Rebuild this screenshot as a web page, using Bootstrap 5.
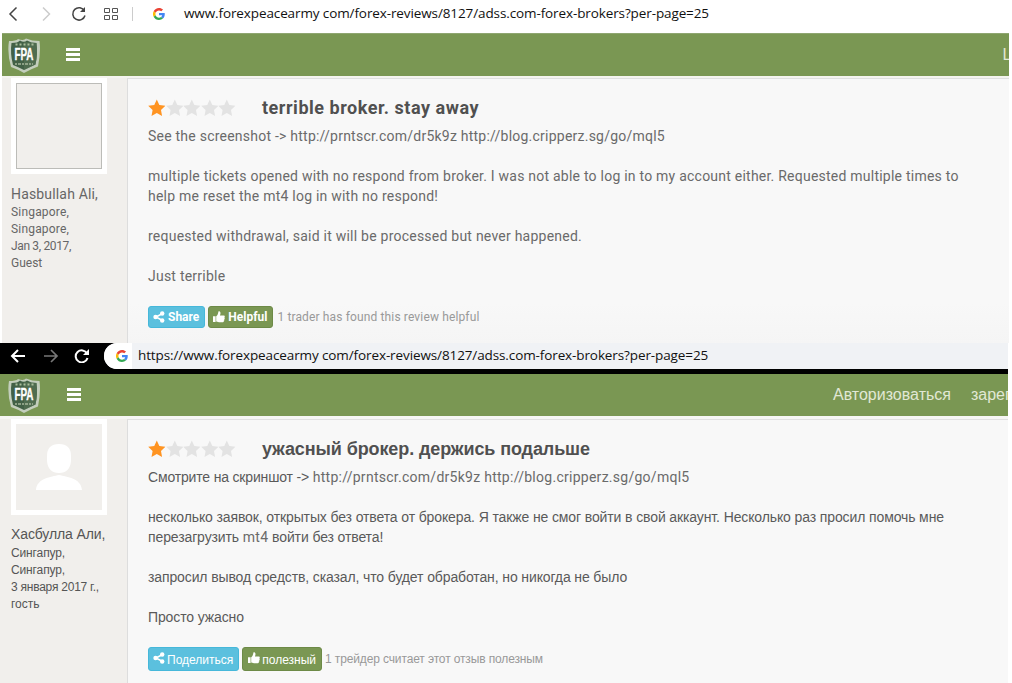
<!DOCTYPE html>
<html lang="en">
<head>
    <meta charset="UTF-8">
    <meta name="viewport" content="width=device-width, initial-scale=1.0">
    <title>ADSS reviews</title>
    <link href="https://cdn.jsdelivr.net/npm/bootstrap@5.3.0/dist/css/bootstrap.min.css" rel="stylesheet">
    <style>
        body {
            width: 1012px;
            height: 683px;
            overflow: hidden;
            background: #fff;
            color: #555;
            font-family: Roboto, "Liberation Sans", sans-serif;
            font-size: 14px;
            line-height: 20px;
        }
        svg { display: block; flex: none; }
        .capture { overflow: hidden; white-space: nowrap; }
        .capture-en { height: 343px; }
        .capture-ru { height: 340px; font-family: "Liberation Sans", sans-serif; }

        /* browser bars */
        .url-text {
            font: 13.5px/20px "Open Sans", "Noto Sans", sans-serif;
            letter-spacing: -0.11px;
            color: #111;
            padding-bottom: 2px;
        }
        .bar-light { height: 33px; padding: 0 0 5px 5px; }
        .bar-light .sep { width: 1px; height: 14px; background: #ccc; }
        .bar-dark { height: 31px; width: 1008px; background: #000; padding-bottom: 5px; }
        .address-pill {
            height: 26px;
            background: #f0f2f5;
            border-radius: 13px 0 0 13px;
            padding-left: 4px;
        }
        .g-disc { width: 28px; height: 26px; margin-left: -4px; padding-left: 4px; border-radius: 13px 0 0 13px; background: #fff; }

        /* site header */
        .site-bar { height: 42px; background: #7a9753; color: #e1e8d5; font-size: 16px; overflow: hidden; }
        .capture-en .site-bar { height: 43px; width: 1007px; margin-left: 2px; padding-left: 6px; border-top: 1px solid #8fa671; }
        .capture-ru .site-bar { width: 1008px; padding-left: 8px; }
        .menu-icon { flex: none; width: 14px; height: 13px; margin-bottom: 1px; border-top: 3px solid #fff; border-bottom: 3px solid #fff; }
        .menu-icon::after { content: ""; display: block; height: 3px; margin-top: 2px; background: #fff; }

        /* review */
        .review { background: #f1efec; }
        .capture-en .review { width: 1007px; margin-left: 2px; height: 267px; border-top: 2px solid #f4f4ef; }
        .capture-ru .review { width: 1008px; height: 267px; border-top: 3px solid #f6f6f4; }
        .author { width: 125px; padding-left: 9px; font-size: 12px; line-height: 17px; color: #666; }
        .capture-ru .author { width: 127px; padding-left: 11px; color: #555; }
        .avatar { width: 96px; height: 96px; padding: 5px; background: #fff; }
        .avatar div { width: 86px; height: 86px; background: #f1efec; }
        .avatar .missing { border: 1px solid #bcbcb8; }
        .author-name { font-size: 14px; line-height: 20px; }
        .review-body { background: #f8f8f8; border-left: 1px solid #ddd; border-top: 1px solid #e0e0e0; padding: 18px 0 0 20px; }
        .capture-en .review-body { background: linear-gradient(#f8f8f8 85%, #f5f5f5); }
        .review-title { font-size: 18px; line-height: 22px; font-weight: 700; color: #505050; margin: 0 0 0 26px; }
        .review-body p { margin: 0 0 20px; color: #6a6a6a; }
        .capture-ru .review-body p { color: #5a5a5a; }
        .votes { margin-top: 1px; }
        .vote { height: 22px; padding: 0 5px; border-radius: 3px; font-size: 12px; line-height: 20px; color: #fff; display: flex; align-items: center; }
        .capture-ru .vote { height: 24px; padding-top: 1px; }
        .vote-share { background: #5bc0de; border: 1px solid #46b8da; }
        .vote-helpful { background: #7a9753; border: 1px solid #6d8a47; }
        .count-text { font-size: 12px; color: #999; }

        /* tracking */
        .t-en { letter-spacing: 0.232px; }
        .t-ru { letter-spacing: -0.118px; }
        .t-link { font-family: Roboto, sans-serif; letter-spacing: 0.27px; color: #6a6a6a; }
    </style>
</head>
<body>
    <svg width="0" height="0" class="position-absolute">
        <defs>
            <symbol id="google" viewBox="0 0 48 48">
                <path fill="#ea4335" d="M24 9.500c3.500 0 6.700 1.200 9.200 3.600l6.900-6.900C35.900 2.400 30.500 0 24 0 14.600 0 6.500 5.400 2.600 13.200l8 6.200C12.400 13.700 17.700 9.500 24 9.500z"/>
                <path fill="#4285f4" d="M47 24.600c0-1.600-.2-3.100-.4-4.600H24v9h12.900c-.6 3-2.200 5.500-4.700 7.200l7.700 6C44.400 38 47 31.800 47 24.600z"/>
                <path fill="#fbbc05" d="M10.500 28.600a14.500 14.500 0 0 1 0-9.200l-8-6.200a24 24 0 0 0 0 21.600z"/>
                <path fill="#34a853" d="M24 48c6.500 0 11.900-2.100 15.900-5.800l-7.700-6c-2.200 1.400-4.900 2.300-8.200 2.300-6.300 0-11.600-4.200-13.500-9.900l-8 6.200C6.500 42.600 14.600 48 24 48z"/>
            </symbol>
            <symbol id="fpa" viewBox="0 0 32 35">
                <path d="M1 3Q8 3 10 1Q16 3 18 .5Q24 3 31.500 3Q33 14 30 28.500Q23 31 16 35Q9 31 3 29Q-1 15 1 3Z" fill="#c3cebc"/>
                <path d="M3.500 5Q10 5 12 2.500Q16 5 19 2.500Q23 5 28.500 5Q30 16 27.500 26.500Q22 29 16 32Q10 29 5 27Q2 15 3.500 5Z" fill="#426046"/>
                <path d="M16 4L28.500 5Q30 16 27.500 26.500L16 32Z" fill="#587555" opacity=".6"/>
                <path d="M7.500 6.500h18" stroke="#a9bd9b" stroke-width="2" stroke-dasharray="2 2"/>
                <text x="16" y="22" text-anchor="middle" textLength="19" lengthAdjust="spacingAndGlyphs" font-family="Liberation Sans" font-weight="700" font-size="17" fill="#fff" stroke="#fff" stroke-width=".4">FPA</text>
                <path d="M7 26h18" stroke="#a5b59b" stroke-width="1.600" stroke-dasharray="2 1 3 1"/>
            </symbol>
            <symbol id="star" viewBox="0 0 18 18">
                <path d="M9 .3l2.600 5.600 6.200.8-4.500 4.300 1.100 6.200L9 14.200l-5.400 3 1.100-6.200L.2 6.700l6.200-.8z"/>
            </symbol>
            <symbol id="share" viewBox="0 0 12 12">
                <path d="M9.500 2.500L3 6l6.500 3.500" fill="none" stroke="#fff" stroke-width="1.500"/>
                <g fill="#fff"><circle cx="9.200" cy="2.500" r="2.200"/><circle cx="2.600" cy="6" r="2.300"/><circle cx="9.200" cy="9.500" r="2.200"/></g>
            </symbol>
            <symbol id="thumb" viewBox="0 0 12 12">
                <path fill="#fff" d="M0 5.200h2.600V11H0zM3.200 5.200C4.600 4.500 5 3 5.400.7 5.600-.1 7.500.3 7.500 2.200c0 1-.4 1.700-.6 2.300h3.700c1.300 0 1.500 1.400.8 1.900.6.500.5 1.500-.2 1.800.4.600.2 1.400-.4 1.600.2 1-.4 1.500-1.400 1.500H7c-1.500 0-2.300-.5-3.800-.8z"/>
            </symbol>
        </defs>
    </svg>

    <section class="capture capture-en">
        <div class="bar-light d-flex align-items-center">
            <svg width="18" height="16" fill="none" stroke="#444" stroke-width="1.500"><path d="M11.500 1.500L5 8l6.500 6.500"/></svg>
            <svg width="18" height="16" class="ms-3" fill="none" stroke="#ccc" stroke-width="1.500"><path d="M4 1.500L10.500 8 4 14.500"/></svg>
            <svg width="16" height="16" style="margin-left:14px" fill="none" stroke="#444" stroke-width="1.500"><path d="M13.500 5A6.200 6.200 0 1 0 14 9.500"/><path d="M14 1v5h-5z" fill="#444" stroke="none"/></svg>
            <svg width="14" height="12" style="margin-left:17px" fill="none" stroke="#555"><path d="M.5.5h5v4h-5zM8.500.5h5v4h-5zM.5 7.500h5v4h-5zM8.500 7.500h5v4h-5z"/></svg>
            <div class="sep" style="margin-left:14px"></div>
            <svg width="12" height="12" style="margin-left:20px"><use href="#google"/></svg>
            <span class="url-text" style="margin-left:19px">www.forexpeacearmy com/forex-reviews/8127/adss.com-forex-brokers?per-page=25</span>
        </div>
        <div class="site-bar d-flex align-items-center">
            <svg width="32" height="35"><use href="#fpa"/></svg>
            <div class="menu-icon" style="margin-left:26px"></div>
            <span class="ms-auto" style="margin-right:-2px">L</span>
        </div>
        <div class="review d-flex">
            <div class="author flex-shrink-0">
                <div class="avatar"><div class="missing"></div></div>
                <div style="height:10px"></div>
                <div class="author-name" style="letter-spacing:.165px">Hasbullah Ali,</div>
                <div style="letter-spacing:.18px">Singapore,<br>Singapore,</div>
                <div style="letter-spacing:-.35px">Jan 3, 2017,</div>
                <div>Guest</div>
            </div>
            <div class="review-body flex-grow-1">
                <div class="d-flex align-items-center">
                    <div class="stars d-flex"></div>
                    <h5 class="review-title" style="letter-spacing:.53px">terrible broker. stay away</h5>
                </div>
                <div class="t-en" style="padding-top:7px">
                    <p>See the screenshot -&gt; http://prntscr.com/dr5k9z http://blog.cripperz.sg/go/mql5</p>
                    <p>multiple tickets opened with no respond from broker. I was not able to log in to my account either. Requested multiple times to<br>help me reset the mt4 log in with no respond!</p>
                    <p>requested withdrawal, said it will be processed but never happened.</p>
                    <p>Just terrible</p>
                </div>
                <div class="votes d-flex align-items-center">
                    <span class="vote vote-share fw-bold"><svg width="12" height="12" style="margin:0 3px 0 -1px"><use href="#share"/></svg>Share</span>
                    <span class="vote vote-helpful fw-bold" style="margin-left:3px"><svg width="12" height="12" style="margin:0 3px 0 -1px"><use href="#thumb"/></svg>Helpful</span>
                    <span class="count-text" style="margin-left:4px;letter-spacing:.14px">1 trader has found this review helpful</span>
                </div>
            </div>
        </div>
    </section>

    <section class="capture capture-ru">
        <div class="bar-dark d-flex align-items-center">
            <svg width="16" height="14" style="margin-left:10px" fill="none" stroke="#fff" stroke-width="2"><path d="M8 1L2 7l6 6M2 7h13"/></svg>
            <svg width="16" height="14" style="margin-left:17px" fill="none" stroke="#777" stroke-width="1.700"><path d="M8 1l6 6-6 6M14 7H1"/></svg>
            <svg width="16" height="14" style="margin-left:15px" fill="none" stroke="#fff" stroke-width="2"><path d="M13 4.500A6 6 0 1 0 13.500 9"/><path d="M15 0v6H9z" fill="#fff" stroke="none"/></svg>
            <div class="address-pill d-flex align-items-center flex-grow-1" style="margin-left:14px">
                <div class="g-disc d-flex align-items-center"><svg width="12" height="12" style="margin-left:8px"><use href="#google"/></svg></div>
                <span class="url-text" style="margin-left:6px">https://www.forexpeacearmy com/forex-reviews/8127/adss.com-forex-brokers?per-page=25</span>
            </div>
        </div>
        <div class="site-bar d-flex align-items-center">
            <svg width="32" height="35"><use href="#fpa"/></svg>
            <div class="menu-icon" style="margin-left:27px"></div>
            <span style="margin-left:752px">Авторизоваться</span>
            <span style="margin-left:20px">зарегистрироваться</span>
        </div>
        <div class="review d-flex">
            <div class="author flex-shrink-0">
                <div class="avatar"><div>
                    <svg width="86" height="86" fill="#fff"><path d="M31 32Q31 20 43 20T55 32V37Q54 49 43 49T31 37ZM20 66C21 54 35 53 43 51 51 53 65 54 66 66Z"/></svg>
                </div></div>
                <div style="height:9px"></div>
                <div class="author-name t-ru">Хасбулла Али,</div>
                <div style="padding-top:1px;letter-spacing:-.13px">Сингапур,<br>Сингапур,</div>
                <div style="letter-spacing:-.24px">3 января 2017 г.,</div>
                <div>гость</div>
            </div>
            <div class="review-body flex-grow-1">
                <div class="d-flex align-items-center">
                    <div class="stars d-flex"></div>
                    <h5 class="review-title" style="letter-spacing:-.106px">ужасный брокер. держись подальше</h5>
                </div>
                <div class="t-ru" style="padding-top:7px">
                    <p><span style="letter-spacing:-.17px">Смотрите на скриншот -&gt; </span><span class="t-link">http://prntscr.com/dr5k9z http://blog.cripperz.sg/go/mql5</span></p>
                    <p>несколько заявок, открытых без ответа от брокера. Я также не смог войти в свой аккаунт. Несколько раз просил помочь мне<br>перезагрузить <span class="t-link">mt4</span> войти без ответа!</p>
                    <p>запросил вывод средств, сказал, что будет обработан, но никогда не было</p>
                    <p>Просто ужасно</p>
                </div>
                <div class="votes d-flex align-items-center">
                    <span class="vote vote-share"><svg width="12" height="12" style="margin:0 2px 3px -1px"><use href="#share"/></svg>Поделиться</span>
                    <span class="vote vote-helpful" style="margin-left:3px"><svg width="12" height="12" style="margin:0 2px 3px 0"><use href="#thumb"/></svg>полезный</span>
                    <span class="count-text" style="margin-left:3px;letter-spacing:-.13px">1 трейдер считает этот отзыв полезным</span>
                </div>
            </div>
        </div>
    </section>

    <script src="https://cdn.jsdelivr.net/npm/bootstrap@5.3.0/dist/js/bootstrap.bundle.min.js"></script>
    <script>
        // One filled star out of five in each review
        document.querySelectorAll('.stars').forEach(function(box) {
            for (let i = 0; i < 5; i++) {
                const fill = i < 1 ? '#ff9422' : '#e3e3e3';
                box.innerHTML += `<svg width="17.6" height="18" fill="${fill}"><use href="#star"/></svg>`;
            }
        });
    </script>
</body>
</html>
